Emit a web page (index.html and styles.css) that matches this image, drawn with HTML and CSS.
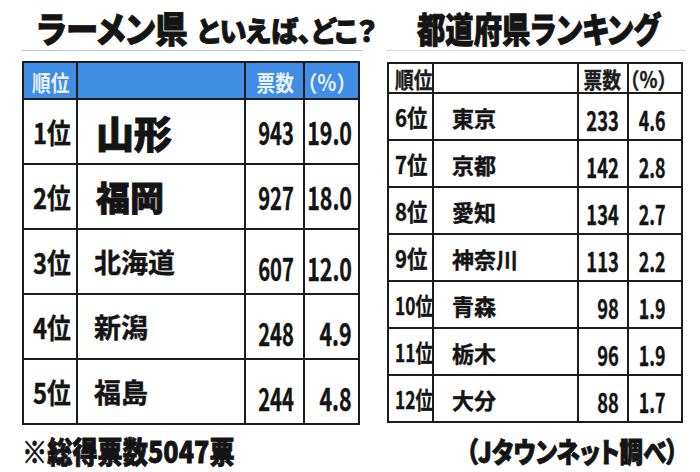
FILE: index.html
```html
<!DOCTYPE html>
<html lang="ja">
<head>
<meta charset="utf-8">
<title>ラーメン県といえば、どこ？ 都道府県ランキング</title>
<link rel="stylesheet" href="styles.css">
</head>
<body>
<div class="page">
  <header class="title">
    <div class="tl">
      <span class="t1"><span class="sq">ラーメン県</span></span>
      <span class="t2"><span class="sq">といえば、どこ？</span></span>
    </div>
    <div class="tr">
      <span class="t3"><span class="sq">都道府県ランキング</span></span>
    </div>
  </header>

  <main class="tables">
    <table class="rank big">
      <colgroup><col class="c1"><col class="c2"><col class="c3"><col class="c4"></colgroup>
      <thead>
        <tr><th class="rk"><span class="sq">順位</span></th><th></th><th class="num"><span class="sq">票数</span></th><th class="pc"><span class="sq paren">（%）</span></th></tr>
      </thead>
      <tbody>
        <tr><td class="rk"><span class="sq">1位</span></td><td class="nm n1">山形</td><td class="num"><span class="sq">943</span></td><td class="pc"><span class="sq">19.0</span></td></tr>
        <tr><td class="rk"><span class="sq">2位</span></td><td class="nm n2">福岡</td><td class="num"><span class="sq">927</span></td><td class="pc"><span class="sq">18.0</span></td></tr>
        <tr class="low"><td class="rk"><span class="sq">3位</span></td><td class="nm n3">北海道</td><td class="num"><span class="sq">607</span></td><td class="pc"><span class="sq">12.0</span></td></tr>
        <tr class="low"><td class="rk"><span class="sq">4位</span></td><td class="nm n3">新潟</td><td class="num"><span class="sq">248</span></td><td class="pc"><span class="sq">4.9</span></td></tr>
        <tr class="low"><td class="rk"><span class="sq">5位</span></td><td class="nm n3">福島</td><td class="num"><span class="sq">244</span></td><td class="pc"><span class="sq">4.8</span></td></tr>
      </tbody>
    </table>

    <table class="rank small">
      <colgroup><col class="c1"><col class="c2"><col class="c3"><col class="c4"></colgroup>
      <thead>
        <tr><th class="rk"><span class="sq">順位</span></th><th></th><th class="num"><span class="sq">票数</span></th><th class="pc"><span class="sq paren">（%）</span></th></tr>
      </thead>
      <tbody>
        <tr><td class="rk"><span class="sq">6位</span></td><td class="nm">東京</td><td class="num"><span class="sq">233</span></td><td class="pc"><span class="sq">4.6</span></td></tr>
        <tr><td class="rk"><span class="sq">7位</span></td><td class="nm">京都</td><td class="num"><span class="sq">142</span></td><td class="pc"><span class="sq">2.8</span></td></tr>
        <tr><td class="rk"><span class="sq">8位</span></td><td class="nm">愛知</td><td class="num"><span class="sq">134</span></td><td class="pc"><span class="sq">2.7</span></td></tr>
        <tr><td class="rk"><span class="sq">9位</span></td><td class="nm">神奈川</td><td class="num"><span class="sq">113</span></td><td class="pc"><span class="sq">2.2</span></td></tr>
        <tr><td class="rk two"><span class="sq">10位</span></td><td class="nm">青森</td><td class="num"><span class="sq">98</span></td><td class="pc"><span class="sq">1.9</span></td></tr>
        <tr><td class="rk two"><span class="sq">11位</span></td><td class="nm">栃木</td><td class="num"><span class="sq">96</span></td><td class="pc"><span class="sq">1.9</span></td></tr>
        <tr><td class="rk two"><span class="sq">12位</span></td><td class="nm">大分</td><td class="num"><span class="sq">88</span></td><td class="pc"><span class="sq">1.7</span></td></tr>
      </tbody>
    </table>
  </main>

  <footer class="foot">
    <span class="f1"><span class="sq">※総得票数5047票</span></span>
    <span class="f2"><span class="sq">（Jタウンネット調べ）</span></span>
  </footer>
</div>
</body>
</html>
```

FILE: styles.css
```css
* { box-sizing: border-box; }

html, body {
  margin: 0;
  padding: 0;
  background: #ffffff;
}

body {
  width: 700px;
  height: 472px;
  overflow: hidden;
  font-family: "Noto Sans CJK JP", "Noto Sans", sans-serif;
  font-feature-settings: "palt";
  color: #141414;
}

.page {
  width: 700px;
  height: 472px;
}

/* generic squeeze for condensed-looking type */
.sq {
  display: inline-block;
  white-space: nowrap;
  transform: scaleX(var(--sx, 1));
  transform-origin: var(--ox, left) center;
}

/* full-width parentheses in the column header */
.paren {
  font-feature-settings: normal;
  text-spacing-trim: space-all;
}

/* ---------- title ---------- */
.title {
  display: flex;
  height: 51px;
  padding-left: 22px;
}

.tl {
  width: 341px;
  display: flex;
  align-items: flex-end;
  border-bottom: 1px solid #aecbe8;
  padding-bottom: 5px;
}

.tr {
  width: 300px;
  margin-left: 23px;
  display: flex;
  align-items: flex-end;
  border-bottom: 1px solid #dadada;
  padding-bottom: 5px;
}

.t1, .t2, .t3 {
  display: inline-block;
  white-space: nowrap;
  font-weight: 900;
  line-height: 1;
  -webkit-text-stroke: 0.9px #141414;
}

.t1 {
  width: 160px;
  margin-left: 15px;
  font-size: 36px;
  --sx: 0.9;
}

.t2 {
  font-size: 28px;
  --sx: 0.97;
  margin-bottom: 1px;
}

.t3 {
  margin-left: 31px;
  font-size: 35px;
  --sx: 0.81;
}

/* ---------- tables ---------- */
.tables {
  display: flex;
  align-items: flex-start;
  gap: 27px;
  padding-left: 22px;
  margin-top: 10px;
}

.rank {
  border-collapse: collapse;
  table-layout: fixed;
  border: 2px solid #1c1c1c;
}

.rank th,
.rank td {
  border: 2px solid #1c1c1c;
  padding: 0;
  white-space: nowrap;
  overflow: visible;
  font-weight: 700;
  line-height: 1;
  -webkit-text-stroke: 0.4px currentColor;
}

.rank .rk { text-align: left; }
.rank .num, .rank .pc { text-align: right; --ox: right; }
.rank .num .sq, .rank .pc .sq { margin-left: -40px; }
.rank .nm { text-align: left; font-weight: 900; }

/* left (big) table */
.big { width: 336px; }
.big .c1 { width: 54px; }
.big .c2 { width: 168px; }
.big .c3 { width: 59px; }
.big .c4 { width: 55px; }

.big thead th {
  height: 37px;
  background: #3f8de4;
  color: #e9f0ff;
  font-size: 22px;
  font-weight: 700;
  -webkit-text-stroke: 0;
}

.big thead .rk { padding-left: 8px; --sx: 0.85; }
.big thead .num { padding-right: 9px; --sx: 0.85; }
.big thead .pc { padding-right: 2px; --sx: 0.9; }

.big tbody td { height: 65px; }

.big tbody .rk {
  padding-left: 9px;
  font-size: 28px;
  --sx: 0.85;
}

.big tbody .nm { padding-left: 18px; }
.big .n1 { font-size: 38px; -webkit-text-stroke: 1px #141414; }
.big .n2 { font-size: 34px; -webkit-text-stroke: 0.8px #141414; }
.big tbody .nm.n3 { font-size: 27px; font-weight: 700; padding-left: 16px; }

.big tbody .num {
  padding-right: 9px;
  font-size: 31px;
  --sx: 0.65;
}

.big tbody .pc {
  padding-right: 6px;
  font-size: 31px;
  --sx: 0.69;
}

.big tbody tr.low .num,
.big tbody tr.low .pc { padding-top: 12px; }

/* right (small) table */
.small { width: 294px; margin-top: 1px; }
.small .c1 { width: 45px; }
.small .c2 { width: 145px; }
.small .c3 { width: 50px; }
.small .c4 { width: 54px; }

.small thead th {
  height: 30px;
  background: #ffffff;
  color: #1c1c1c;
  font-size: 22px;
  font-weight: 700;
}

.small thead .rk { padding-left: 6px; --sx: 0.85; }
.small thead .num { padding-right: 6px; --sx: 0.85; }
.small thead .pc { padding-right: 5px; --sx: 0.85; }

.small tbody td { height: 47px; }

.small tbody .rk {
  padding-left: 6px;
  font-size: 24px;
  --sx: 0.85;
}

.small tbody .rk.two { --sx: 0.72; }

.small tbody .nm {
  padding-left: 18px;
  font-size: 22px;
  font-weight: 700;
}

.small tbody .num {
  padding-right: 8px;
  padding-top: 6px;
  font-size: 27px;
  --sx: 0.68;
}

.small tbody .pc {
  padding-right: 15px;
  padding-top: 6px;
  font-size: 27px;
  --sx: 0.66;
}

/* ---------- footer ---------- */
.foot {
  display: flex;
  justify-content: space-between;
  align-items: flex-end;
  padding: 0 22px 0 22px;
  margin-top: 10px;
}

.f1, .f2 {
  display: inline-block;
  white-space: nowrap;
  font-weight: 900;
  line-height: 1;
  -webkit-text-stroke: 0.8px #141414;
}

.f1 {
  font-size: 30px;
  --sx: 0.84;
}

.f2 {
  font-size: 28px;
  --sx: 0.84;
  --ox: right;
}
```
